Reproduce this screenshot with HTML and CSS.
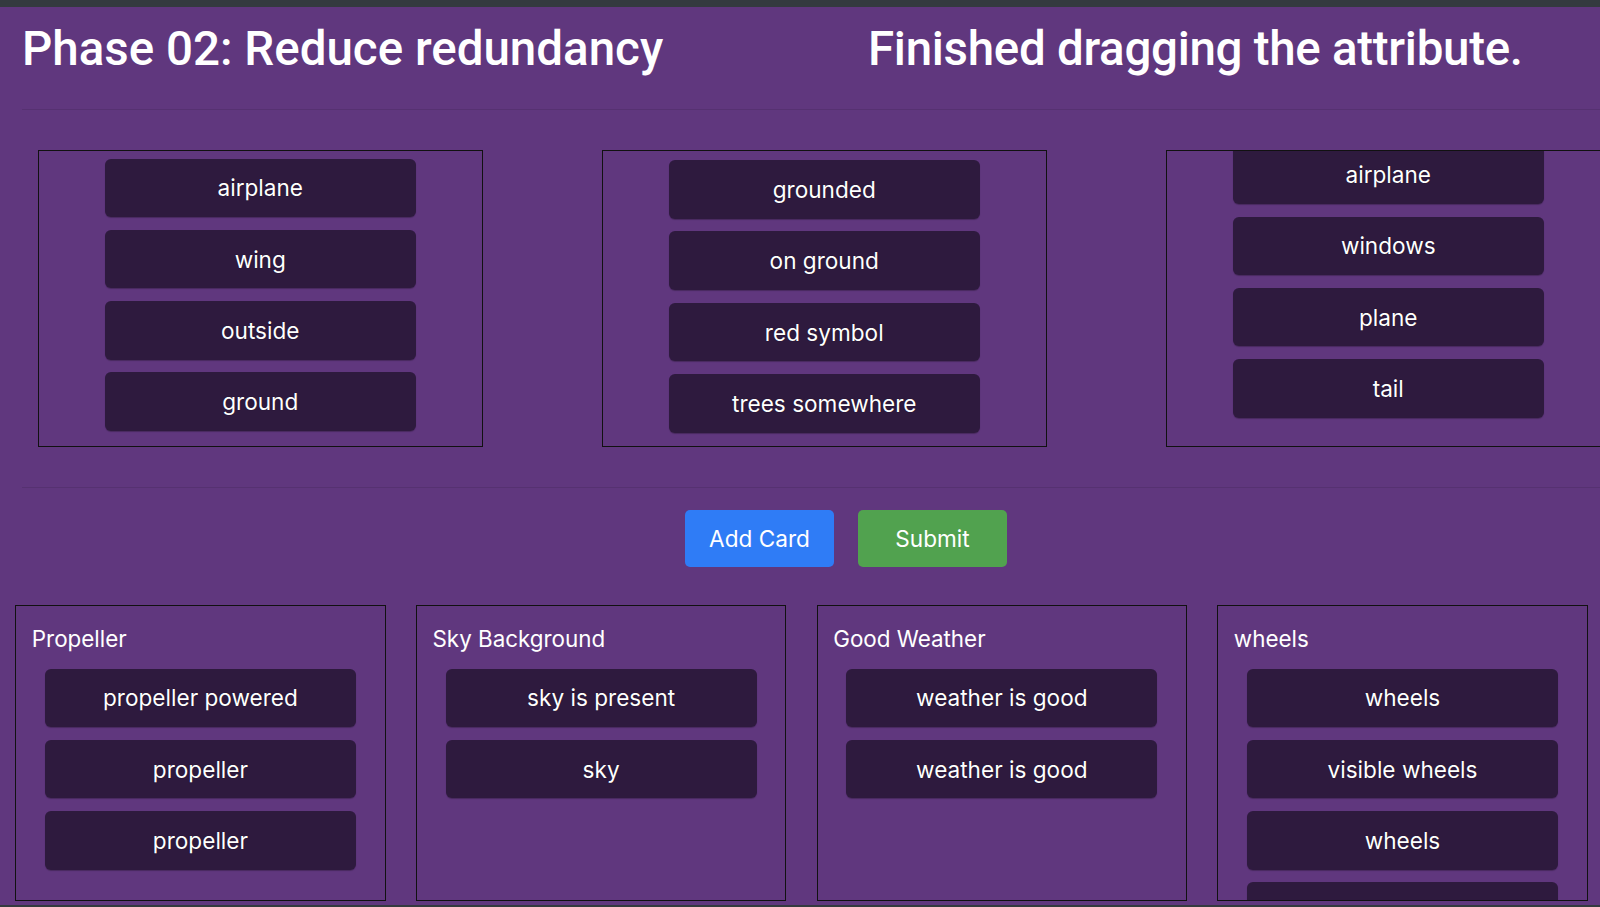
FILE: index.html
```html
<!DOCTYPE html>
<html lang="en">
<head>
<meta charset="utf-8">
<title>Phase 02: Reduce redundancy</title>
<link rel="stylesheet" href="styles.css">
</head>
<body>
<div class="page">
  <header class="head">
    <h1 class="title">Phase 02: Reduce redundancy</h1>
    <h1 class="status">Finished dragging the attribute.</h1>
  </header>
  <hr class="rule">
  <section class="pool">
    <div class="bin">
      <div class="stack">
        <div class="card">airplane</div>
        <div class="card">wing</div>
        <div class="card">outside</div>
        <div class="card">ground</div>
      </div>
    </div>
    <div class="bin">
      <div class="stack stack-low">
        <div class="card">grounded</div>
        <div class="card">on ground</div>
        <div class="card">red symbol</div>
        <div class="card">trees somewhere</div>
      </div>
    </div>
    <div class="bin">
      <div class="stack stack-scrolled">
        <div class="card">airplane</div>
        <div class="card">windows</div>
        <div class="card">plane</div>
        <div class="card">tail</div>
      </div>
    </div>
  </section>
  <hr class="rule rule-lower">
  <div class="actions">
    <button class="btn btn-add" type="button">Add Card</button>
    <button class="btn btn-submit" type="button">Submit</button>
  </div>
  <section class="groups">
    <div class="group">
      <div class="group-title">Propeller</div>
      <div class="stack">
        <div class="card">propeller powered</div>
        <div class="card">propeller</div>
        <div class="card">propeller</div>
      </div>
    </div>
    <div class="group">
      <div class="group-title">Sky Background</div>
      <div class="stack">
        <div class="card">sky is present</div>
        <div class="card">sky</div>
      </div>
    </div>
    <div class="group">
      <div class="group-title">Good Weather</div>
      <div class="stack">
        <div class="card">weather is good</div>
        <div class="card">weather is good</div>
      </div>
    </div>
    <div class="group">
      <div class="group-title">wheels</div>
      <div class="stack">
        <div class="card">wheels</div>
        <div class="card">visible wheels</div>
        <div class="card">wheels</div>
        <div class="card"></div>
      </div>
    </div>
  </section>
</div>
</body>
</html>
```
FILE: styles.css
```css
html, body {
  margin: 0;
  padding: 0;
}
body {
  background: #343a3f;
  font-family: Inter, "Noto Sans", "Liberation Sans", sans-serif;
  color: #fff;
  width: 1600px;
  height: 907px;
  overflow: hidden;
}
.page {
  margin-top: 7px;
  height: 898px;
  background: #60377e;
  overflow: hidden;
}
.head {
  display: grid;
  grid-template-columns: 846px auto;
  padding: 16px 0 0 22px;
  height: 86px;
  box-sizing: border-box;
}
.title, .status {
  margin: 0;
  font-family: Roboto, Inter, "Liberation Sans", sans-serif;
  font-size: 47.5px;
  line-height: 53px;
  font-weight: 500;
  white-space: nowrap;
}
.status {
  letter-spacing: -0.3px;
}
.rule {
  margin: 16px 0 0 22px;
  border: 0;
  border-top: 1px solid rgba(0, 0, 0, 0.1);
  height: 0;
}
.rule-lower {
  margin-top: 40px;
}
.pool {
  display: flex;
  gap: 119.5px;
  padding: 40px 0 0 38px;
}
.bin {
  flex: 0 0 auto;
  width: 444.5px;
  height: 297px;
  box-sizing: border-box;
  border: 1px solid #111;
  overflow: hidden;
}
.stack {
  display: flex;
  flex-direction: column;
  align-items: center;
  gap: 12.5px;
  padding-top: 7.6px;
}
.stack-low {
  padding-top: 9.3px;
}
.stack-scrolled {
  padding-top: 0;
  margin-top: -5.7px;
}
.card {
  flex: 0 0 auto;
  width: 311px;
  height: 58.7px;
  box-sizing: border-box;
  border-radius: 6px;
  background: #2e1a3e;
  box-shadow: 0 1px 1px rgba(0, 0, 0, 0.25);
  display: flex;
  align-items: center;
  justify-content: center;
  font-size: 22.6px;
  text-shadow: 0 0 1px rgba(0, 0, 0, 0.6);
}
.actions {
  display: flex;
  gap: 24.6px;
  padding: 22px 0 0 685.3px;
  height: 57px;
}
.btn {
  width: 148.4px;
  height: 57px;
  border: 0;
  border-radius: 5px;
  color: #fff;
  font-family: inherit;
  font-size: 22.6px;
  padding: 0;
}
.btn-add {
  background: #2f7cf6;
}
.btn-submit {
  background: #51a24f;
}
.groups {
  display: grid;
  grid-template-columns: repeat(4, 370.3px);
  gap: 30.4px;
  padding: 38px 0 0 15.3px;
}
.group {
  height: 296px;
  box-sizing: border-box;
  border: 1px solid #111;
  overflow: hidden;
}
.group-title {
  font-size: 22.4px;
  line-height: 28px;
  padding: 19px 0 0 15.5px;
}
.group .stack {
  padding-top: 15.5px;
}
```
